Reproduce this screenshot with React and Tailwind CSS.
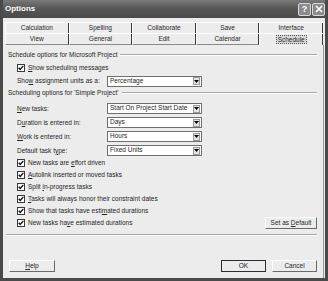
import React from 'react'

const U = ({ children }) => <span className="underline underline-offset-[1px]">{children}</span>

function Check({ children }) {
  return (
    <div className="flex h-[12px] items-center pl-[13px]">
      <div className="flex h-[8px] w-[8px] items-center justify-center border border-[#3a3a3a] bg-white">
        <svg width="6" height="6" viewBox="0 0 7 7">
          <path d="M0.8 3.2 L2.6 5.2 L6.2 1" fill="none" stroke="#111" strokeWidth="1.6" />
        </svg>
      </div>
      <span className="ml-[3px] whitespace-nowrap">{children}</span>
    </div>
  )
}

function Select({ value }) {
  return (
    <div className="flex h-[11px] w-[95px] items-center border border-[#6f6f6f] bg-white pl-[2px] pr-[1px]">
      <span className="flex-1 whitespace-nowrap leading-none">{value}</span>
      <div className="flex h-[8px] w-[7px] items-center justify-center border border-[#9a9a9a] bg-[#e4e4e4]">
        <svg width="5" height="3" viewBox="0 0 5 3">
          <path d="M0 0 H5 L2.5 3 Z" fill="#000" />
        </svg>
      </div>
    </div>
  )
}

function Field({ label, value }) {
  return (
    <div className="flex h-[11px] items-center pl-[13px]">
      <span className="w-[90px] whitespace-nowrap">{label}</span>
      <Select value={value} />
    </div>
  )
}

function Header({ children }) {
  return (
    <div className="flex h-[10px] items-center pl-[4px] pr-[6px]">
      <span className="whitespace-nowrap">{children}</span>
      <div className="ml-[3px] h-[2px] flex-1 border-t border-b border-t-[#a8a8a8] border-b-white" />
    </div>
  )
}

function Btn({ children, def, className = '' }) {
  return (
    <div
      className={`flex h-[12px] items-center justify-center bg-[#ececec] ${
        def ? 'border border-[#2e2e2e]' : 'border border-t-white border-l-white border-r-[#6a6a6a] border-b-[#6a6a6a]'
      } ${className}`}
    >
      <span className="whitespace-nowrap">{children}</span>
    </div>
  )
}

const row1 = ['Calculation', 'Spelling', 'Collaborate', 'Save', 'Interface']
const row2 = ['View', 'General', 'Edit', 'Calendar', 'Schedule']

export default function App() {
  return (
    <div
      className="flex h-[281px] w-[328px] flex-col overflow-hidden border-x-[3px] border-b-[3px] border-[#4a4a4a] bg-[#ececec] text-[6.5px] text-[#262626]"
      style={{ fontFamily: '"Liberation Sans", Arial, sans-serif' }}
    >
      {/* title bar */}
      <div className="flex h-[18px] shrink-0 items-center justify-between bg-gradient-to-b from-[#7a7a7a] via-[#555555] to-[#4a4a4a] pl-[2px]">
        <span className="text-[8px] font-bold text-white">Options</span>
        <div className="flex gap-[1px]">
          <div className="flex h-[13px] w-[13px] items-center justify-center rounded-[2px] border border-[#d8d8d8] bg-[#8c8c8c] text-[9px] font-bold leading-none text-white">
            ?
          </div>
          <div className="flex h-[13px] w-[13px] items-center justify-center rounded-[2px] border border-[#d8d8d8] bg-[#8c8c8c]">
            <svg width="8" height="8" viewBox="0 0 8 8">
              <path d="M1 1 L7 7 M7 1 L1 7" stroke="#fff" strokeWidth="1.6" />
            </svg>
          </div>
        </div>
      </div>

      {/* tabs */}
      <div className="mt-[4px] pl-[2px] pr-[2px]">
        <div className="grid h-[11px] grid-cols-5 border-t border-white">
          {row1.map((t) => (
            <div key={t} className="flex items-center justify-center border-l border-r border-l-white border-r-[#3a3a3a]">
              {t}
            </div>
          ))}
        </div>
        <div className="grid h-[12px] grid-cols-5 border-t border-white">
          {row2.map((t, i) => (
            <div
              key={t}
              className={`flex items-center justify-center border-l border-r border-l-white border-r-[#3a3a3a] ${
                i < 4 ? 'border-b border-b-[#8a8a8a]' : ''
              }`}
            >
              {i === 4 ? (
                <span className="flex h-[9px] items-center border border-dotted border-[#555] bg-[#d8d8d8] px-[1px]">{t}</span>
              ) : (
                t
              )}
            </div>
          ))}
        </div>
      </div>

      {/* panel */}
      <div className="ml-[1px] mr-[1px] flex flex-1 flex-col border-r border-r-[#9a9a9a]">
        <div className="mt-[5px]">
          <Header>Schedule options for Microsoft Project</Header>
        </div>
        <div className="mt-[3px] h-[10px]">
          <div className="-mt-[1px]">
            <Check>
              <U>S</U>how scheduling messages
            </Check>
          </div>
        </div>
        <div className="mt-[2px] flex h-[12px] items-center pl-[13px]">
          <span className="w-[90px] whitespace-nowrap">
            Sho<U>w</U> assignment units as a:
          </span>
          <div className="h-[11px]">
            <Select value="Percentage" />
          </div>
        </div>
        <div className="mt-[1px]">
          <Header>Scheduling options for 'Simple Project'</Header>
        </div>
        <div className="mt-[5px] flex flex-col gap-[3px]">
          <Field label={<><U>N</U>ew tasks:</>} value="Start On Project Start Date" />
          <Field label={<>D<U>u</U>ration is entered in:</>} value="Days" />
          <Field label={<><U>W</U>ork is entered in:</>} value="Hours" />
          <Field label={<>Default task t<U>y</U>pe:</>} value="Fixed Units" />
        </div>
        <div className="mt-[1px] flex flex-col">
          <Check>
            New tasks are <U>e</U>ffort driven
          </Check>
          <Check>
            <U>A</U>utolink inserted or moved tasks
          </Check>
          <Check>
            Split <U>i</U>n-progress tasks
          </Check>
          <Check>
            <U>T</U>asks will always honor their constraint dates
          </Check>
          <Check>
            Show that tasks have esti<U>m</U>ated durations
          </Check>
          <div className="flex h-[12px] items-center pr-[6px]">
            <div className="flex-1">
              <Check>
                New tasks ha<U>v</U>e estimated durations
              </Check>
            </div>
            <Btn className="w-[52px]">
              Set as <U>D</U>efault
            </Btn>
          </div>
        </div>
        <div className="ml-[2px] mr-[6px] mt-[5px] h-[2px] border-t border-b border-t-[#a8a8a8] border-b-white" />
        <div className="mt-[24px] flex items-center pl-[5px] pr-[6px]">
          <Btn className="w-[46px]">
            <U>H</U>elp
          </Btn>
          <div className="flex-1" />
          <Btn def className="w-[45px]">
            OK
          </Btn>
          <Btn className="ml-[6px] w-[45px]">Cancel</Btn>
        </div>
      </div>
    </div>
  )
}
